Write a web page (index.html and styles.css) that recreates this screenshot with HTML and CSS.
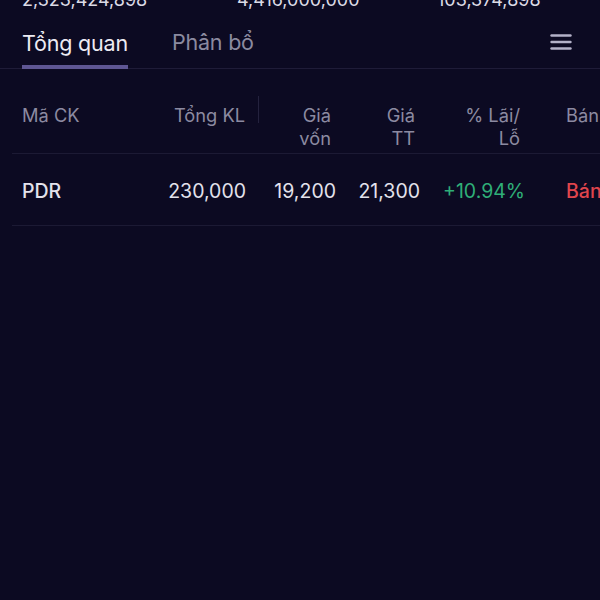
FILE: index.html
```html
<!DOCTYPE html>
<html lang="vi">
<head>
<meta charset="utf-8">
<link rel="stylesheet" href="styles.css">
</head>
<body>
<div class="page">
  <div class="totals">
    <span class="tot t1">2,323,424,898</span>
    <span class="tot t2">4,416,000,000</span>
    <span class="tot t3">103,374,898</span>
  </div>
  <div class="tabs">
    <div class="tab active">Tổng quan</div>
    <div class="tab">Phân bổ</div>
    <div class="menu">
      <svg width="22" height="16" viewBox="0 0 22 16"><g stroke="#b3b1c8" stroke-width="2.4" stroke-linecap="round"><line x1="1.5" y1="1.5" x2="20.5" y2="1.5"/><line x1="1.5" y1="8" x2="20.5" y2="8"/><line x1="1.5" y1="14.5" x2="20.5" y2="14.5"/></g></svg>
    </div>
  </div>
  <div class="row head">
    <div class="c c1">Mã CK</div>
    <div class="c c2">Tổng KL</div>
    <div class="sep"></div>
    <div class="c c4">Giá<br>vốn</div>
    <div class="c c5">Giá<br>TT</div>
    <div class="c c6">% Lãi/<br>Lỗ</div>
    <div class="c c7">Bán</div>
  </div>
  <div class="row data">
    <div class="c c1 sym">PDR</div>
    <div class="c c2">230,000</div>
    <div class="sep"></div>
    <div class="c c4">19,200</div>
    <div class="c c5">21,300</div>
    <div class="c c6 up">+10.94%</div>
    <div class="c c7 sell">Bán</div>
  </div>
</div>
</body>
</html>
```
FILE: styles.css
```css
* { box-sizing: border-box; }
html, body {
  margin: 0;
  padding: 0;
  background: #0c0a22;
  width: 600px;
  height: 600px;
  overflow: hidden;
}
body {
  font-family: Inter, Roboto, "Noto Sans", sans-serif;
  color: #e6e5ef;
}
.page { width: 600px; }
.totals {
  height: 10px;
  overflow: hidden;
  display: flex;
  align-items: flex-end;
  padding-left: 22px;
  font-size: 18px;
  color: #dcdbe6;
  white-space: nowrap;
}
.totals .tot { line-height: 18px; margin-bottom: 1px; }
.totals .t1 { width: 215px; }
.totals .t2 { width: 200px; }
.tabs {
  display: flex;
  align-items: flex-end;
  height: 59px;
  padding-left: 22px;
  padding-right: 28px;
  border-bottom: 1px solid #1f1c38;
}
.tab {
  font-size: 21.5px;
  line-height: 26px;
  padding-bottom: 9px;
  border-bottom: 4px solid transparent;
  color: #8b8aa0;
  margin-right: 44px;
  letter-spacing: -0.2px;
}
.tab.active {
  color: #ecebf3;
  border-bottom-color: #5e5693;
  margin-bottom: -1px;
}
.menu {
  margin-left: auto;
  align-self: center;
  display: flex;
  padding-top: 6px;
}
.menu svg { display: block; }
.row {
  display: grid;
  grid-template-columns: 124px 100px 13px 77px 84px 105px 1fr;
  margin-left: 12px;
  padding-left: 10px;
}
.head {
  font-size: 18.3px;
  line-height: 23px;
  color: #8c8aa1;
  padding-top: 35px;
  height: 85px;
  border-bottom: 1px solid #1c1a34;
}
.data {
  font-size: 19.5px;
  line-height: 24px;
  height: 72px;
  padding-top: 2px;
  align-items: center;
  border-bottom: 1px solid #1c1a34;
}
.c { white-space: nowrap; }
.c2, .c4, .c5, .c6 { text-align: right; }
.head .c4, .head .c5, .head .c6 { padding-right: 5px; }
.head .c2 { padding-right: 1px; }
.head .sep {
  border-right: 1px solid #24223e;
  height: 27px;
  margin-top: -8px;
}
.c7 { padding-left: 41px; }
.data .c { color: #e3e2ec; }
.data .sym { font-weight: 500; }
.data .up { color: #2fae78; }
.data .sell { color: #e0454d; font-weight: 500; }
```
